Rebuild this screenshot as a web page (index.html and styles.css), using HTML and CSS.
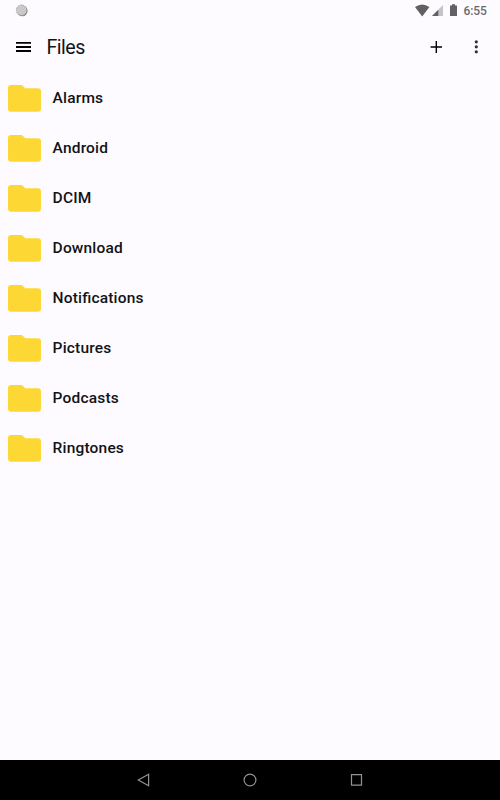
FILE: index.html
```
<!DOCTYPE html>
<html lang="en">
    <head>
        <meta charset="utf-8">
        <title>Files</title>
        <link rel="stylesheet" href="styles.css">
    </head>
    <body>
        <svg class="defs">
            <symbol id="folder" viewBox="0 0 33 27">
                <path d="M3 0H13.2Q14 0 14.6 .6L17.2 3.3H30Q33 3.3 33 6.3V23.8Q33 26.8 30 26.8H3Q0 26.8 0 23.8V3Q0 0 3 0Z" />
            </symbol>
        </svg>
        <div class="status">
            <svg class="spinner" width="14" height="14" viewBox="0 0 14 14">
                <circle cx="7.3" cy="7" r="5.2" fill="#777" />
                <circle cx="6.6" cy="6.2" r="5.2" fill="#c9c9c9" stroke="#999" stroke-width="1" stroke-dasharray="1.5 1" />
            </svg>
            <svg class="signals" width="44" height="14" viewBox="0 0 44 14">
                <path d="M0 3Q7.2-2 14.4 3L7.2 12.4Z" fill="#616161" />
                <path d="M28 1V12H17Z" fill="#c4c3c6" />
                <path d="M23.3 5.7V12H17Z" fill="#616161" />
                <path d="M35 1.4H37V.2H40V1.4H42V12H35Z" fill="#616161" />
            </svg>
            <span class="time">6:55</span>
        </div>
        <div class="toolbar">
            <svg class="menu" width="15" height="10" viewBox="0 0 15 10">
                <path d="M0 0H15V1.7H0ZM0 4H15V6H0ZM0 8H15V10H0Z" />
            </svg>
            <h1>Files</h1>
            <svg class="add" width="12" height="12" viewBox="0 0 12 12">
                <path d="M5.6 0H7V5.2H12V6.8H7V12H5.6V6.8H.6V5.2H5.6Z" />
            </svg>
            <svg class="more" width="4" height="14" viewBox="0 0 4 14">
                <circle cx="2.3" cy="1.8" r="1.6" />
                <circle cx="2.3" cy="6.8" r="1.6" />
                <circle cx="2.3" cy="11.8" r="1.6" />
            </svg>
        </div>
        <ul class="files">
            <li><svg class="folder"><use href="#folder" /></svg><span>Alarms</span></li>
            <li><svg class="folder"><use href="#folder" /></svg><span>Android</span></li>
            <li><svg class="folder"><use href="#folder" /></svg><span>DCIM</span></li>
            <li><svg class="folder"><use href="#folder" /></svg><span>Download</span></li>
            <li><svg class="folder"><use href="#folder" /></svg><span>Notifications</span></li>
            <li><svg class="folder"><use href="#folder" /></svg><span>Pictures</span></li>
            <li><svg class="folder"><use href="#folder" /></svg><span>Podcasts</span></li>
            <li><svg class="folder"><use href="#folder" /></svg><span>Ringtones</span></li>
        </ul>
        <div class="navbar">
            <svg width="14" height="14" viewBox="0 0 14 14">
                <path d="M11.6 1.2V12.8L1.3 7Z" />
            </svg>
            <svg width="14" height="14" viewBox="0 0 14 14">
                <circle cx="7" cy="7" r="5.9" />
            </svg>
            <svg width="14" height="14" viewBox="0 0 14 14">
                <path d="M1.5 1.7H11.5V12.1H1.5Z" />
            </svg>
        </div>
    </body>
</html>
```
FILE: styles.css
```
body {
    margin: 0;
    height: 800px;
    display: flex;
    flex-direction: column;
    background: #fdfbff;
    color: #121316;
    font-family: Roboto, sans-serif;
}

svg {
    display: block;
    flex-shrink: 0;
}

.defs {
    position: absolute;
    width: 0;
    height: 0;
}

.status {
    display: flex;
    align-items: center;
    height: 21px;
    padding: 0 13px 0 15px;
    box-sizing: border-box;
}

.signals {
    margin-left: auto;
}

.time {
    width: 23.5px;
    margin-left: 4.5px;
    color: #6a6a6c;
    font-size: 12px;
    font-weight: 500;
    letter-spacing: -0.1px;
    white-space: nowrap;
}

.toolbar {
    display: flex;
    align-items: center;
    height: 52px;
    padding: 0 22px 0 16px;
    box-sizing: border-box;
}

.toolbar h1 {
    margin: 2px 0 0 15.5px;
    font-size: 19.6px;
    font-weight: 400;
    line-height: 24px;
    letter-spacing: -0.5px;
}

.add {
    margin-left: auto;
}

.more {
    margin-left: 32px;
    fill: #303136;
}

.files {
    flex: 1;
    margin: 0;
    padding: 0;
    list-style: none;
}

.files li {
    display: flex;
    align-items: center;
    height: 50px;
    padding-left: 8px;
    font-size: 15.5px;
    font-weight: 500;
    line-height: 18px;
    letter-spacing: 0.18px;
    font-feature-settings: 'liga' 1;
}

.folder {
    width: 33px;
    height: 27px;
    margin: 1px 11.6px 0 0;
    fill: #fdd835;
}

.navbar {
    display: flex;
    justify-content: center;
    align-items: center;
    gap: 92.5px;
    height: 40px;
    background: #000;
    fill: none;
    stroke: #929292;
    stroke-width: 1.2;
}
```
